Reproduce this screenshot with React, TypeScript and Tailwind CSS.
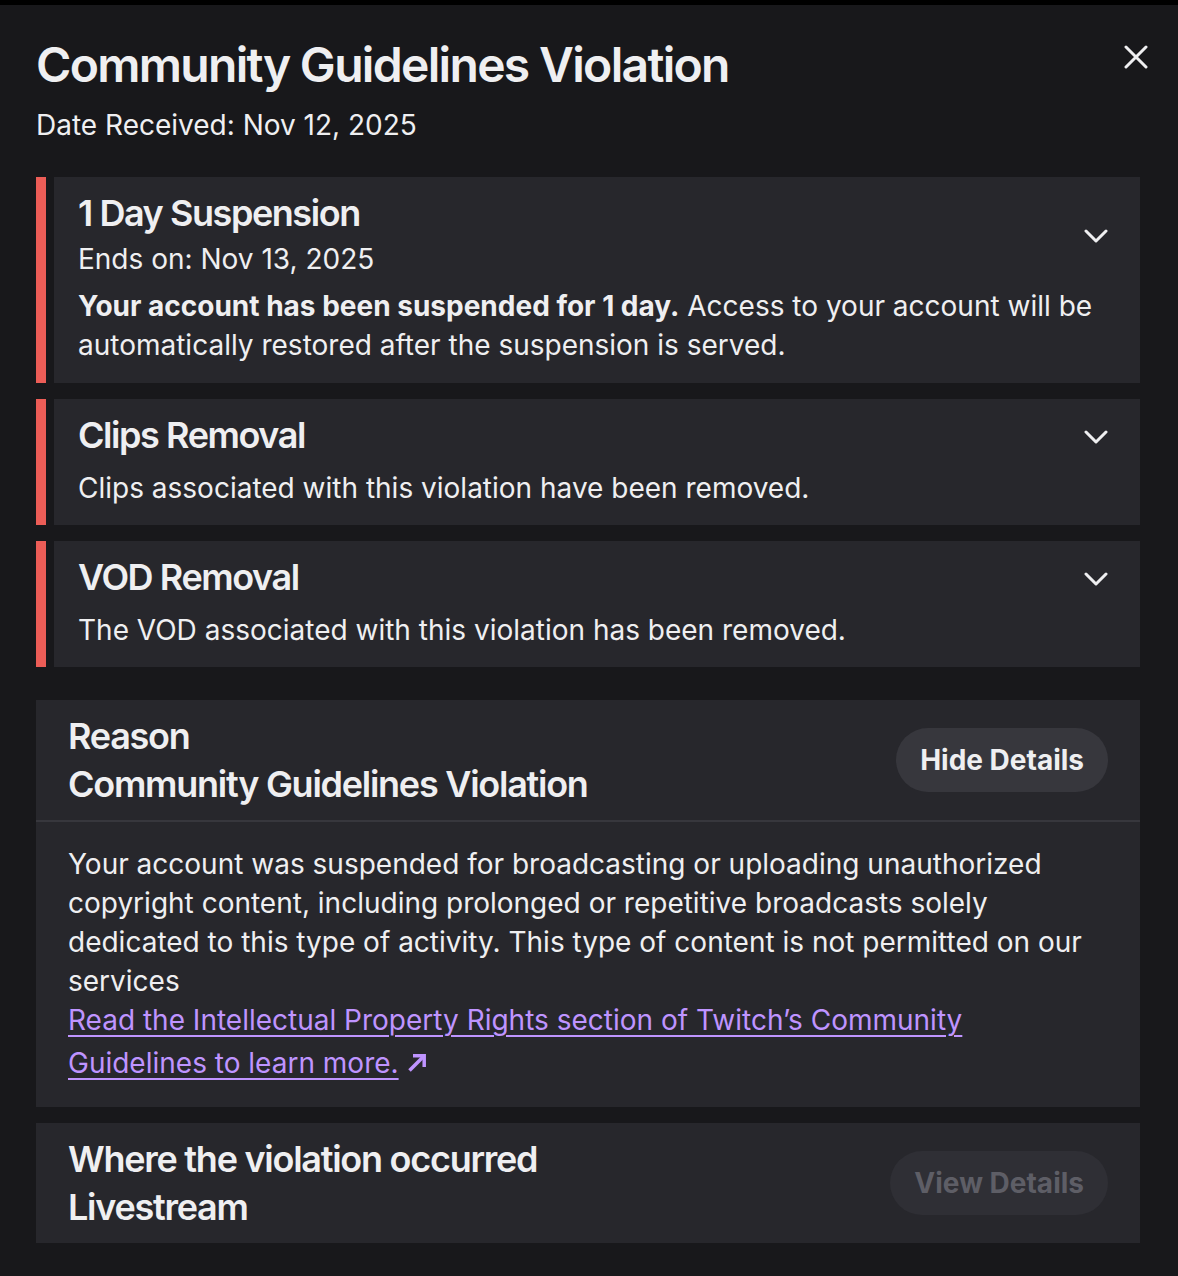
import React from "react";

const ChevronDown = () => (
    <svg width="24" height="14" viewBox="0 0 24 14" fill="none" className="block shrink-0 mt-[3px]">
        <path d="M2 2 L12 12 L22 2" stroke="#efeff1" strokeWidth="3" strokeLinecap="round" strokeLinejoin="round"/>
    </svg>
);

const CloseIcon = () => (
    <svg width="24" height="24" viewBox="0 0 24 24" fill="none" className="block">
        <path d="M2 2 L22 22 M22 2 L2 22" stroke="#efeff1" strokeWidth="3" strokeLinecap="round"/>
    </svg>
);

const ExternalArrow = () => (
    <span className="inline-block h-[33px] w-5 ml-2 pt-[13px] align-baseline">
        <svg width="20" height="20" viewBox="0 0 20 20" fill="none" className="block">
            <path d="M2.5 17.5 L16 4" stroke="#bf94ff" strokeWidth="3.5"/>
            <path d="M6 2.8 H17.2 V14" stroke="#bf94ff" strokeWidth="3.5"/>
        </svg>
    </span>
);

type PenaltyProps = {
    title: string;
    subtitle?: string;
    children: React.ReactNode;
};

const Penalty = ({title, subtitle, children}: PenaltyProps) => (
    <div className="flex gap-2">
        <div className="w-[10px] shrink-0 bg-[#ec5d57]"/>
        <div className="flex-1 bg-[#27272c] pl-6 pr-8 pt-3 pb-4">
            <div className="flex items-center justify-between">
                <div>
                    <h3 className="text-[36px] leading-[48px] font-semibold tracking-[-0.04em]">{title}</h3>
                    {subtitle && <p className="mt-[3px]">{subtitle}</p>}
                </div>
                <ChevronDown/>
            </div>
            <div className={subtitle ? "mt-2 pb-[2px]" : "mt-[10px] pb-[1px]"}>{children}</div>
        </div>
    </div>
);

export default function App() {
    return (
        <div className="min-h-screen bg-[#18181b] border-t-[5px] border-black font-['Inter',sans-serif] text-[28px] leading-[39px] text-[#efeff1] px-[36px] pt-[30px] pb-[34px] pr-[38px]">
            <div className="flex justify-between">
                <div>
                    <h1 className="text-[48px] leading-[60px] font-semibold tracking-[-0.035em]">Community Guidelines Violation</h1>
                    <p className="mt-[11px]">Date Received: Nov 12, 2025</p>
                </div>
                <button className="mt-[10px] -mr-2 self-start">
                    <CloseIcon/>
                </button>
            </div>

            <div className="mt-[32px] flex flex-col gap-4">
                <Penalty title="1 Day Suspension" subtitle="Ends on: Nov 13, 2025">
                    <p>
                        <span className="font-bold">Your account has been suspended for 1 day.</span>{" "}
                        Access to your account will be automatically restored after the suspension is served.
                    </p>
                </Penalty>
                <Penalty title="Clips Removal">
                    <p>Clips associated with this violation have been removed.</p>
                </Penalty>
                <Penalty title="VOD Removal">
                    <p>The VOD associated with this violation has been removed.</p>
                </Penalty>
            </div>

            <div className="mt-[33px] bg-[#27272c]">
                <div className="flex items-center justify-between px-8 py-3">
                    <div className="text-[36px] leading-[48px] font-semibold tracking-[-0.035em]">
                        <div>Reason</div>
                        <div>Community Guidelines Violation</div>
                    </div>
                    <button className="h-16 px-6 rounded-full bg-[#37373d] font-bold">Hide Details</button>
                </div>
                <div className="border-t-2 border-[#37373d] px-8 pt-[23px] pb-6">
                    <p>
                        Your account was suspended for broadcasting or uploading unauthorized copyright content,
                        including prolonged or repetitive broadcasts solely dedicated to this type of activity. This
                        type of content is not permitted on our services
                    </p>
                    <p>
                        <a href="#" className="text-[#bf94ff] underline underline-offset-[5px] decoration-2">
                            Read the Intellectual Property Rights section of Twitch’s Community Guidelines to learn more.
                        </a>
                        <ExternalArrow/>
                    </p>
                </div>
            </div>

            <div className="mt-4 bg-[#27272c] flex items-center justify-between px-8 py-3">
                <div className="text-[36px] leading-[48px] font-semibold tracking-[-0.035em]">
                    <div>Where the violation occurred</div>
                    <div>Livestream</div>
                </div>
                <button className="h-16 px-6 rounded-full bg-[#2f2f35] text-[#5e5e66] font-bold">View Details</button>
            </div>
        </div>
    );
}
